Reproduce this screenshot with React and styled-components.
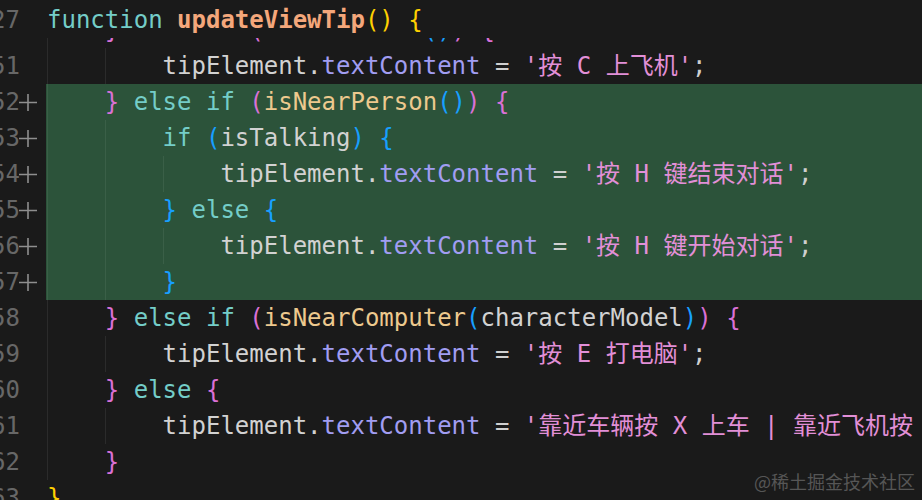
import styled, { createGlobalStyle } from 'styled-components';

const GlobalStyle = createGlobalStyle`
  html, body {
    margin: 0;
    padding: 0;
    background: #1a1a1a;
  }
`;

const colors = {
  kw: '#74cdc8',
  decl: '#f4a77b',
  fn: '#edc98e',
  v: '#d2d2d2',
  prop: '#a19df2',
  str: '#e28fd7',
  op: '#cfcfcf',
  b1: '#ffd000',
  b2: '#da70d6',
  b3: '#179fff',
};

const Editor = styled.div`
  position: relative;
  width: 922px;
  height: 500px;
  overflow: hidden;
  background: #1a1a1a;
  font-family: "DejaVu Sans Mono", "Noto Sans CJK SC", monospace;
  font-size: 24px;
  line-height: 36px;
`;

const Lines = styled.div`
  padding-top: 12px;
`;

const Row = styled.div`
  display: flex;
  height: 36px;
`;

const Gutter = styled.div`
  flex: 0 0 46px;
  min-width: 0;
  display: flex;
`;

const LineNo = styled.span`
  flex: 0 0 20px;
  min-width: 0;
  display: flex;
  justify-content: flex-end;
  color: #676767;
  white-space: nowrap;
`;

const Marker = styled.span`
  flex: 0 0 26px;
  min-width: 0;
  display: flex;
  align-items: center;

  svg {
    margin-left: -1px;
  }
`;

const Code = styled.div`
  flex: 1;
  min-width: 0;
  padding-left: 1px;
  white-space: pre;
  overflow: hidden;
  background: ${({ $added }) => ($added ? '#2c533a' : 'transparent')};
`;

const Indent = styled.span`
  display: inline-block;
  vertical-align: top;
  width: 4ch;
  height: 36px;
  box-sizing: border-box;
  border-left: 1px solid ${({ $added }) => ($added ? 'rgba(255,255,255,0.07)' : '#2b2b2b')};
`;

const Tok = styled.span`
  color: ${({ $k }) => colors[$k] || colors.op};
  font-weight: ${({ $k }) => ($k === 'decl' ? 'bold' : 'normal')};
`;

const StickyHeader = styled.div`
  position: absolute;
  top: 0;
  left: 0;
  right: 0;
  height: 38px;
  padding-top: 2px;
  box-sizing: border-box;
  overflow: hidden;
  background: #1a1a1a;
`;

const Watermark = styled.div`
  position: absolute;
  right: 7px;
  bottom: 8px;
  font-family: "Noto Sans CJK SC", "Noto Sans", sans-serif;
  font-size: 18px;
  line-height: 22px;
  color: #565656;
`;

const PlusIcon = () => (
  <svg width="18" height="18" viewBox="0 0 18 18">
    <path d="M0 9.5H18M9 1V18" stroke="#8e8e8e" strokeWidth="1.6" fill="none" />
  </svg>
);

const tip = (s) => [['tipElement', 'v'], ['.', 'v'], ['textContent', 'prop'], [' = ', 'op'], [`'${s}'`, 'str'], [';', 'op']];

const header = { n: 27, indent: 0, toks: [['function', 'kw'], [' ', 'op'], ['updateViewTip', 'decl'], ['()', 'b1'], [' ', 'op'], ['{', 'b1']] };

const lines = [
  { n: 50, indent: 1, toks: [['}', 'b2'], [' ', 'op'], ['else', 'kw'], [' ', 'op'], ['if', 'kw'], [' ', 'op'], ['(', 'b2'], ['isNearPlane', 'fn'], ['()', 'b3'], [')', 'b2'], [' ', 'op'], ['{', 'b2']] },
  { n: 51, indent: 2, toks: tip('按 C 上飞机') },
  { n: 52, indent: 1, added: true, toks: [['}', 'b2'], [' ', 'op'], ['else', 'kw'], [' ', 'op'], ['if', 'kw'], [' ', 'op'], ['(', 'b2'], ['isNearPerson', 'fn'], ['()', 'b3'], [')', 'b2'], [' ', 'op'], ['{', 'b2']] },
  { n: 53, indent: 2, added: true, toks: [['if', 'kw'], [' ', 'op'], ['(', 'b3'], ['isTalking', 'v'], [')', 'b3'], [' ', 'op'], ['{', 'b3']] },
  { n: 54, indent: 3, added: true, toks: tip('按 H 键结束对话') },
  { n: 55, indent: 2, added: true, toks: [['}', 'b3'], [' ', 'op'], ['else', 'kw'], [' ', 'op'], ['{', 'b3']] },
  { n: 56, indent: 3, added: true, toks: tip('按 H 键开始对话') },
  { n: 57, indent: 2, added: true, toks: [['}', 'b3']] },
  { n: 58, indent: 1, toks: [['}', 'b2'], [' ', 'op'], ['else', 'kw'], [' ', 'op'], ['if', 'kw'], [' ', 'op'], ['(', 'b2'], ['isNearComputer', 'fn'], ['(', 'b3'], ['characterModel', 'v'], [')', 'b3'], [')', 'b2'], [' ', 'op'], ['{', 'b2']] },
  { n: 59, indent: 2, toks: tip('按 E 打电脑') },
  { n: 60, indent: 1, toks: [['}', 'b2'], [' ', 'op'], ['else', 'kw'], [' ', 'op'], ['{', 'b2']] },
  { n: 61, indent: 2, toks: tip('靠近车辆按 X 上车 | 靠近飞机按 C 上飞机') },
  { n: 62, indent: 1, toks: [['}', 'b2']] },
  { n: 63, indent: 0, toks: [['}', 'b1']] },
];

const CodeLine = ({ line }) => (
  <Row>
    <Gutter>
      <LineNo>{line.n}</LineNo>
      <Marker>{line.added && <PlusIcon />}</Marker>
    </Gutter>
    <Code $added={line.added}>
      {Array.from({ length: line.indent }).map((_, i) => (
        <Indent key={i} $added={line.added} />
      ))}
      {line.toks.map(([text, k], i) => (
        <Tok key={i} $k={k}>{text}</Tok>
      ))}
    </Code>
  </Row>
);

const App = () => {
  return (
    <Editor>
      <GlobalStyle />
      <Lines>
        {lines.map((line) => (
          <CodeLine key={line.n} line={line} />
        ))}
      </Lines>
      <StickyHeader>
        <CodeLine line={header} />
      </StickyHeader>
      <Watermark>@稀土掘金技术社区</Watermark>
    </Editor>
  );
};

export default App;
